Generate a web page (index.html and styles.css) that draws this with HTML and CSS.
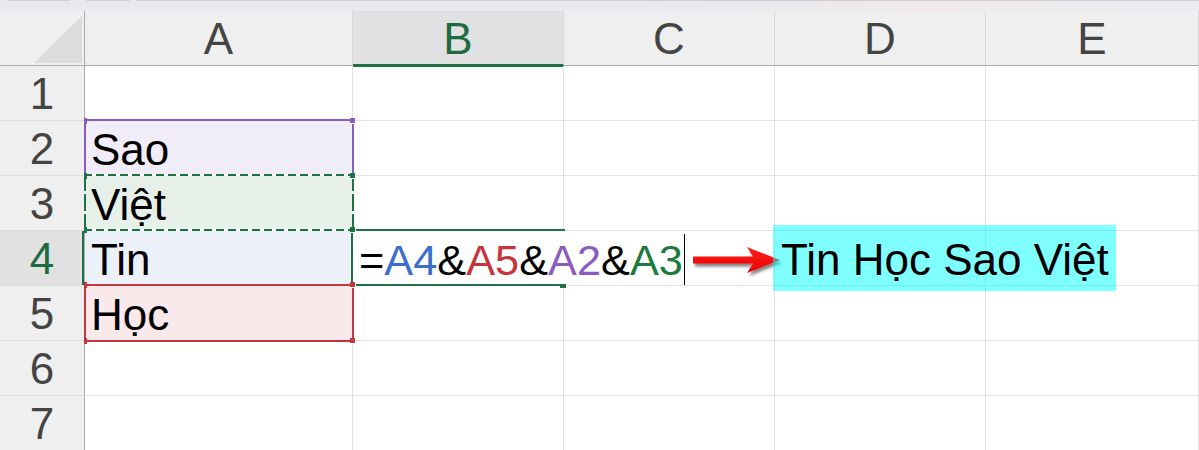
FILE: index.html
```html
<!DOCTYPE html>
<html lang="vi">
<head>
<meta charset="utf-8">
<title>Sheet</title>
<link rel="stylesheet" href="styles.css">
</head>
<body>
<div class="topbar"></div>
<div class="sheet">
  <div class="hd corner"><div class="tri"></div></div>
  <div class="hd col">A</div>
  <div class="hd col sel">B</div>
  <div class="hd col">C</div>
  <div class="hd col">D</div>
  <div class="hd col">E</div>

  <div class="rh">1</div><div class="c"></div><div class="c"></div><div class="c"></div><div class="c"></div><div class="c"></div>
  <div class="rh">2</div><div class="c a-purple">Sao</div><div class="c"></div><div class="c"></div><div class="c"></div><div class="c"></div>
  <div class="rh">3</div><div class="c a-green">Việt</div><div class="c"></div><div class="c"></div><div class="c"></div><div class="c"></div>
  <div class="rh rsel">4</div><div class="c a-blue">Tin</div>
  <div class="c edit"><span class="k">=</span><span class="r-blue">A4</span><span class="k">&amp;</span><span class="r-red">A5</span><span class="k">&amp;</span><span class="r-purple">A2</span><span class="k">&amp;</span><span class="r-green">A3</span></div>
  <div class="c"></div><div class="c"></div><div class="c"></div>
  <div class="rh">5</div><div class="c a-red">Học</div><div class="c"></div><div class="c"></div><div class="c"></div><div class="c"></div>
  <div class="rh">6</div><div class="c"></div><div class="c"></div><div class="c"></div><div class="c"></div><div class="c"></div>
  <div class="rh">7</div><div class="c"></div><div class="c"></div><div class="c"></div><div class="c"></div><div class="c"></div>

  <div class="ref ref-purple"></div>
  <div class="ref ref-red"></div>
  <div class="ref ants"></div>
  <div class="active"></div>

  <div class="h h-purple hr" style="top:107px"></div>
  <div class="h h-purple hl" style="top:107px"></div>
  <div class="h h-green hr" style="top:162px"></div>
  <div class="h h-green hl" style="top:162px"></div>
  <div class="h h-green hr" style="top:216px"></div>
  <div class="h h-green hl" style="top:216px"></div>
  <div class="h h-red hr" style="top:271px"></div>
  <div class="h h-red hl" style="top:271px"></div>
  <div class="h h-red hr" style="top:327px"></div>
  <div class="h h-red hl" style="top:327px"></div>
  <div class="h h-green hb"></div>

  <div class="caret"></div>

  <svg class="arrow" width="100" height="40" viewBox="0 0 100 40">
    <defs>
      <linearGradient id="rg" x1="0" y1="0" x2="0" y2="1">
        <stop offset="0" stop-color="#ff2020"/>
        <stop offset="1" stop-color="#e80000"/>
      </linearGradient>
      <filter id="sh" x="-20%" y="-40%" width="140%" height="180%">
        <feGaussianBlur in="SourceAlpha" stdDeviation="1.5"/>
        <feOffset dx="2" dy="2.5" result="b"/>
        <feComponentTransfer><feFuncA type="linear" slope="0.5"/></feComponentTransfer>
        <feMerge><feMergeNode/><feMergeNode in="SourceGraphic"/></feMerge>
      </filter>
    </defs>
    <polygon points="5,12.5 65,12.5 59,3 92,16 59,29 65,19.5 5,19.5" fill="url(#rg)" filter="url(#sh)"/>
  </svg>

  <div class="result">Tin Học Sao Việt</div>
</div>
</body>
</html>
```
FILE: styles.css
```css
* { box-sizing: border-box; }
html, body { margin: 0; padding: 0; }
body {
  width: 1199px;
  height: 450px;
  overflow: hidden;
  background: #ffffff;
  font-family: "Liberation Sans", Arial, sans-serif;
}
.topbar {
  height: 11px;
  background:
    linear-gradient(90deg, transparent 7px, #cfcfd3 7px 70px, transparent 70px 86px, #cfcfd3 86px 130px, transparent 130px 137px, #cfcfd3 137px) top / 100% 1px no-repeat,
    linear-gradient(90deg, #e8e8ed 0%, #e9e9ee 55%, #efe9ea 78%, #eaeaef 100%);
}
.sheet {
  position: relative;
  display: grid;
  grid-template-columns: 85px 268px 211px 211px 211px 212px 1px;
  grid-template-rows: repeat(8, 55px);
}
.hd {
  background: #efefef;
  border-bottom: 1px solid #ababab;
  border-right: 1px solid #d8d8d8;
  font-size: 44px;
  color: #444444;
  text-align: center;
  line-height: 50px;
  padding-top: 3px;
}
.hd.corner {
  border-right: 1px solid #ababab;
  display: flex;
  justify-content: flex-end;
  align-items: flex-end;
  padding: 0 2px 2px 0;
}
.tri {
  width: 48px;
  height: 47px;
  background: #dcdcdc;
  clip-path: polygon(100% 0, 100% 100%, 0 100%);
}
.hd.col:nth-child(6) { grid-column: 6 / span 2; }
.hd.sel {
  background: #e1e1e1;
  color: #1e6b41;
  border-bottom: 2px solid #1e7145;
  box-shadow: 0 1px 0 #1e7145;
}
.rh {
  grid-column: 1;
  background: #efefef;
  border-right: 1px solid #ababab;
  border-bottom: 1px solid #dcdcdc;
  font-size: 44px;
  color: #444444;
  text-align: center;
  line-height: 50px;
  padding-top: 3px;
}
.rh.rsel {
  background: #e1e1e1;
  color: #1e6b41;
  box-shadow: inset -2px 0 0 #1e7145;
}
.c {
  border-right: 1px solid #e1e1e1;
  border-bottom: 1px solid #e1e1e1;
  font-size: 44px;
  color: #000000;
  line-height: 50px;
  padding: 4px 0 0 6px;
  white-space: nowrap;
}
.c:nth-child(6n+6) { grid-column: 6 / span 2; }
.a-purple { background: #f1edf8; }
.a-green { background: #e6f0e8; }
.a-blue { background: #ebf0f9; }
.a-red { background: #f9e9ea; }
.edit {
  position: relative;
  z-index: 1;
  padding-left: 6px;
  font-size: 43.3px;
  border-right-color: transparent;
}
.k { color: #000000; }
.r-blue { color: #3a6dcd; }
.r-red { color: #c6353c; }
.r-purple { color: #8a5cc1; }
.r-green { color: #1c7a3c; }

.ref {
  position: absolute;
  left: 84px;
  width: 270px;
  z-index: 2;
}
.ref-purple { top: 108px; height: 57px; border: 2px solid #8b5cc0; }
.ref-red { top: 273px; height: 58px; border: 2px solid #c4363e; }
.ants {
  top: 163px;
  height: 57px;
  background:
    repeating-linear-gradient(90deg, #1d7343 0 8px, #ffffff 8px 12px) top / 100% 2px no-repeat,
    repeating-linear-gradient(90deg, #1d7343 0 8px, #ffffff 8px 12px) bottom / 100% 2px no-repeat,
    repeating-linear-gradient(180deg, #1d7343 0 17px, #ffffff 17px 20px) left / 2px 100% no-repeat,
    repeating-linear-gradient(180deg, #1d7343 0 17px, #ffffff 17px 20px) right / 2px 100% no-repeat;
}
.active {
  position: absolute;
  left: 351px;
  top: 218px;
  width: 214px;
  height: 57px;
  border: 2px solid #1e7145;
  border-right: none;
  z-index: 3;
}
.h {
  position: absolute;
  width: 6px;
  height: 6px;
  z-index: 4;
  border: 1px solid #ffffff;
  border-left: none;
  border-top: none;
}
.hr { left: 350px; width: 6px; }
.hl { left: 84px; width: 3px; border: none; }
.hb { left: 560px; top: 273px; width: 6px; height: 4px; border: none; }
.h-purple { background: #8b5cc0; }
.h-green { background: #1d7343; }
.h-red { background: #c4363e; }

.caret {
  position: absolute;
  left: 684px;
  top: 223px;
  width: 1px;
  height: 51px;
  background: #000000;
  z-index: 5;
}
.arrow {
  position: absolute;
  left: 688px;
  top: 233px;
  z-index: 5;
}
.result {
  position: absolute;
  left: 773px;
  top: 214px;
  width: 343px;
  height: 66px;
  background: rgba(0, 255, 255, 0.5);
  font-size: 44px;
  line-height: 50px;
  padding: 10px 0 0 8px;
  color: #000000;
  white-space: nowrap;
  z-index: 5;
}
```
